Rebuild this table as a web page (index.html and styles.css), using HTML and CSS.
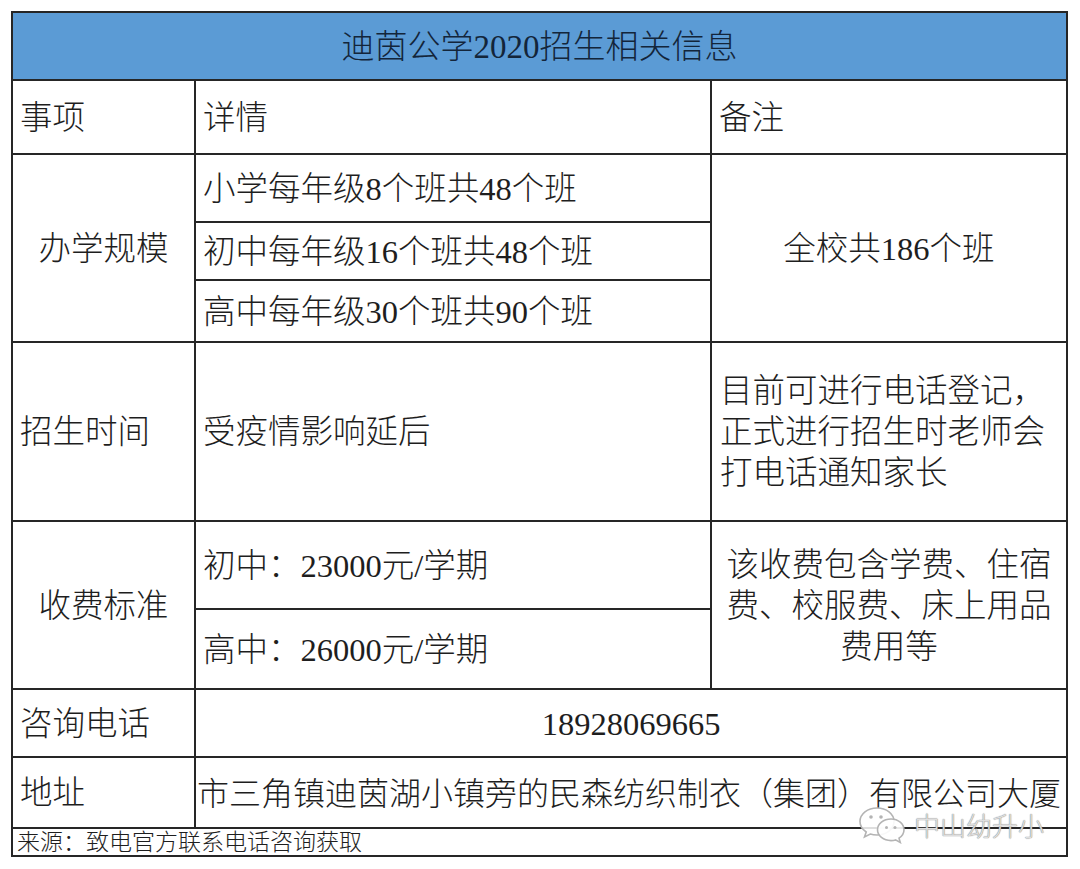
FILE: index.html
```html
<!DOCTYPE html>
<html lang="zh-CN">
<head>
<meta charset="utf-8">
<title>迪茵公学2020招生相关信息</title>
<link rel="stylesheet" href="styles.css">
</head>
<body>
<div class="page">
  <div class="sheet">
    <div class="cell title">迪茵公学2020招生相关信息</div>

    <div class="cell">事项</div>
    <div class="cell">详情</div>
    <div class="cell">备注</div>

    <div class="cell center span3">办学规模</div>
    <div class="cell">小学每年级8个班共48个班</div>
    <div class="cell center span3">全校共186个班</div>
    <div class="cell">初中每年级16个班共48个班</div>
    <div class="cell">高中每年级30个班共90个班</div>

    <div class="cell">招生时间</div>
    <div class="cell">受疫情影响延后</div>
    <div class="cell multi">目前可进行电话登记，<br>正式进行招生时老师会<br>打电话通知家长</div>

    <div class="cell center span2">收费标准</div>
    <div class="cell">初中：23000元/学期</div>
    <div class="cell center multi span2">该收费包含学费、住宿<br>费、校服费、床上用品<br>费用等</div>
    <div class="cell">高中：26000元/学期</div>

    <div class="cell">咨询电话</div>
    <div class="cell center wide">18928069665</div>

    <div class="cell">地址</div>
    <div class="cell wide address">市三角镇迪茵湖小镇旁的民森纺织制衣（集团）有限公司大厦</div>

    <div class="cell source">来源：致电官方联系电话咨询获取</div>
  </div>

  <div class="watermark">
    <svg class="wm-icon" width="50" height="40" viewBox="0 0 50 40">
      <path d="M19 4C9.6 4 2 10 2 17.5c0 4.3 2.4 8 6.2 10.5L6.5 33l5.8-3c2 .7 4.3 1 6.7 1C28.4 31 36 25 36 17.5S28.4 4 19 4z" fill="rgba(255,255,255,0.85)" stroke="#b4b4b4" stroke-width="1.6"/>
      <path d="M33 15c-7.5 0-13.5 4.8-13.5 10.8S25.5 36.6 33 36.6c1.6 0 3.1-.2 4.5-.7l4.8 2.6-1.3-4.3c3.1-2 5-4.9 5-8.4C46 19.8 40.3 15 33 15z" fill="rgba(255,255,255,0.9)" stroke="#b4b4b4" stroke-width="1.6"/>
      <circle cx="13" cy="13" r="1.8" fill="#b4b4b4"/>
      <circle cx="23" cy="13" r="1.8" fill="#b4b4b4"/>
      <circle cx="28.5" cy="23.5" r="1.5" fill="#b4b4b4"/>
      <circle cx="37" cy="23.5" r="1.5" fill="#b4b4b4"/>
    </svg>
    <span class="wm-text">中山幼升小</span>
  </div>
</div>
</body>
</html>
```

FILE: styles.css
```css
html, body {
  margin: 0;
  padding: 0;
  background: #ffffff;
}

.page {
  position: relative;
  width: 1080px;
  height: 869px;
  padding: 11px 0 0 11px;
  box-sizing: border-box;
}

.sheet {
  width: 1057px;
  box-sizing: border-box;
  display: grid;
  grid-template-columns: 181px 514px 354px;
  grid-template-rows: 66px 72px 66px 56px 60px 177px 86px 78px 66px 69px 26px;
  gap: 2px;
  padding: 2px;
  background: #262626;
  font-family: "Liberation Serif", "Noto Sans CJK SC", serif;
  font-weight: 300;
  font-size: 32.5px;
  color: #1e1e1e;
}

.cell {
  background: #ffffff;
  display: flex;
  align-items: center;
  padding-left: 7px;
  padding-top: 2px;
  white-space: nowrap;
  overflow: hidden;
  line-height: 1;
}

.title {
  grid-column: 1 / 4;
  justify-content: center;
  padding-left: 0;
  background: #5b9bd5;
  color: #13253a;
  font-size: 33px;
}

.center {
  justify-content: center;
  text-align: center;
  padding-left: 0;
}

.span3 {
  grid-row: span 3;
}

.span2 {
  grid-row: span 2;
}

.multi {
  line-height: 41px;
  white-space: normal;
  padding-left: 8px;
}

.center.multi {
  padding-left: 0;
}

.wide {
  grid-column: 2 / 4;
}

.address {
  padding-left: 1px;
  font-size: 32px;
}

.source {
  grid-column: 1 / 4;
  font-size: 23px;
  padding-left: 4px;
  padding-top: 0;
  align-items: flex-end;
  padding-bottom: 1px;
}

.watermark {
  position: absolute;
  left: 858px;
  top: 804px;
  display: flex;
  align-items: center;
  gap: 6px;
  pointer-events: none;
}

.wm-text {
  font-family: "Noto Sans CJK SC", sans-serif;
  font-weight: 300;
  font-size: 26px;
  color: rgba(238, 238, 238, 0.85);
  text-shadow: 0 0 1px #8a8a8a, 0 0 1px #8a8a8a;
}
```
